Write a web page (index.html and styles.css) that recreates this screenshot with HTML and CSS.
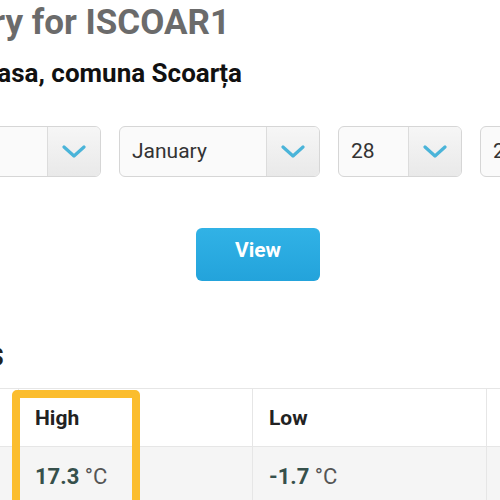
FILE: index.html
```html
<!DOCTYPE html>
<html lang="en">

<head>
    <meta charset="UTF-8">
    <meta name="viewport" content="width=device-width, initial-scale=1.0">
    <title>Weather History for ISCOAR1</title>
    <link rel="stylesheet" href="styles.css">
</head>

<body>
    <div class="page">
        <div class="heading-row title-row">
            <h1>Weather History for ISCOAR1</h1>
        </div>
        <div class="heading-row station-row">
            <h3>Station: Acasa, comuna Scoarța</h3>
        </div>

        <div class="filters">
            <div class="select wide">
                <span class="value">Daily</span>
                <span class="arrow"><svg width="24" height="14" viewBox="0 0 24 14"><path d="M2 2 L12 11 L22 2" fill="none" stroke="#4ab4d9" stroke-width="3.2" stroke-linecap="round" stroke-linejoin="round"/></svg></span>
            </div>
            <div class="select wide">
                <span class="value">January</span>
                <span class="arrow"><svg width="24" height="14" viewBox="0 0 24 14"><path d="M2 2 L12 11 L22 2" fill="none" stroke="#4ab4d9" stroke-width="3.2" stroke-linecap="round" stroke-linejoin="round"/></svg></span>
            </div>
            <div class="select narrow">
                <span class="value">28</span>
                <span class="arrow"><svg width="24" height="14" viewBox="0 0 24 14"><path d="M2 2 L12 11 L22 2" fill="none" stroke="#4ab4d9" stroke-width="3.2" stroke-linecap="round" stroke-linejoin="round"/></svg></span>
            </div>
            <div class="select narrow">
                <span class="value">2019</span>
                <span class="arrow"><svg width="24" height="14" viewBox="0 0 24 14"><path d="M2 2 L12 11 L22 2" fill="none" stroke="#4ab4d9" stroke-width="3.2" stroke-linecap="round" stroke-linejoin="round"/></svg></span>
            </div>
        </div>

        <button class="view-btn">View</button>

        <div class="heading-row section-row">
            <h2>Summary Statistics</h2>
        </div>

        <div class="summary">
            <table>
                <tr class="head">
                    <th></th>
                    <th>High</th>
                    <th>Low</th>
                    <th>Average</th>
                </tr>
                <tr class="data">
                    <td>Temperature</td>
                    <td><b>17.3</b> <span class="unit">°C</span></td>
                    <td><b>-1.7</b> <span class="unit">°C</span></td>
                    <td><b>6.4</b> <span class="unit">°C</span></td>
                </tr>
            </table>
            <div class="highlight"></div>
        </div>
    </div>
</body>

</html>
```

FILE: styles.css
```css
body {
    margin: 0;
    font-family: Roboto, "Liberation Sans", sans-serif;
    background-color: #fff;
    color: #333;
    overflow: hidden;
}

.page {
    padding-top: 3px;
}

/* headings are cut by the left edge, so they end at a fixed point */
.heading-row {
    display: flex;
    justify-content: flex-end;
    white-space: nowrap;
}

.title-row {
    width: 230px;
}

.station-row {
    width: 242px;
    margin-top: 15px;
}

.section-row {
    width: 4px;
    margin-top: 54px;
}

h1 {
    margin: 0;
    font-size: 35px;
    line-height: 40px;
    font-weight: 700;
    color: #6b6b6b;
}

h2 {
    margin: 0;
    font-size: 35px;
    line-height: 40px;
    font-weight: 700;
    color: #222;
}

h3 {
    margin: 0;
    font-size: 26px;
    line-height: 30px;
    font-weight: 700;
    color: #111;
}

.filters {
    display: flex;
    gap: 18px;
    margin-top: 38px;
    margin-left: -100px;
}

.select {
    display: flex;
    flex-shrink: 0;
    height: 49px;
    border: 1px solid #d6d6d6;
    border-radius: 6px;
    background-color: #fafafa;
    overflow: hidden;
}

.select.wide {
    width: 199px;
}

.select.narrow {
    width: 122px;
}

.value {
    flex: 1;
    padding-left: 12px;
    font-size: 21px;
    line-height: 49px;
    color: #333;
}

.arrow {
    width: 52px;
    display: flex;
    align-items: center;
    justify-content: center;
    border-left: 1px solid #dcdcdc;
    background: linear-gradient(#f6f6f6, #e9e9e9);
}

.view-btn {
    display: block;
    width: 124px;
    height: 53px;
    margin: 51px 0 0 196px;
    padding: 0 0 10px;
    border: none;
    border-radius: 6px;
    background: linear-gradient(#31b2e6, #23a3db);
    color: #fff;
    font-family: Roboto, "Liberation Sans", sans-serif;
    font-size: 21px;
    font-weight: 700;
    cursor: pointer;
}

.summary {
    position: relative;
    width: 950px;
    margin-top: 13px;
    margin-left: -250px;
}

table {
    width: 100%;
    table-layout: fixed;
    border-collapse: collapse;
}

th,
td {
    padding: 0 16px;
    text-align: left;
    white-space: nowrap;
    border: 1px solid #e6e6e6;
}

th:nth-child(1) {
    width: 235px;
}

th:nth-child(2),
th:nth-child(3) {
    width: 201px;
}

.head th {
    height: 57px;
    font-size: 21px;
    font-weight: 700;
    color: #222;
    background-color: #fff;
}

.data td {
    height: 58px;
    font-size: 22px;
    background-color: #f5f5f5;
}

.data b {
    font-weight: 700;
    color: #36504b;
}

.unit {
    color: #555;
}

.highlight {
    position: absolute;
    left: 262px;
    top: 2px;
    width: 112px;
    height: 130px;
    border: 8px solid #fbbd2e;
    border-radius: 5px;
}
```
